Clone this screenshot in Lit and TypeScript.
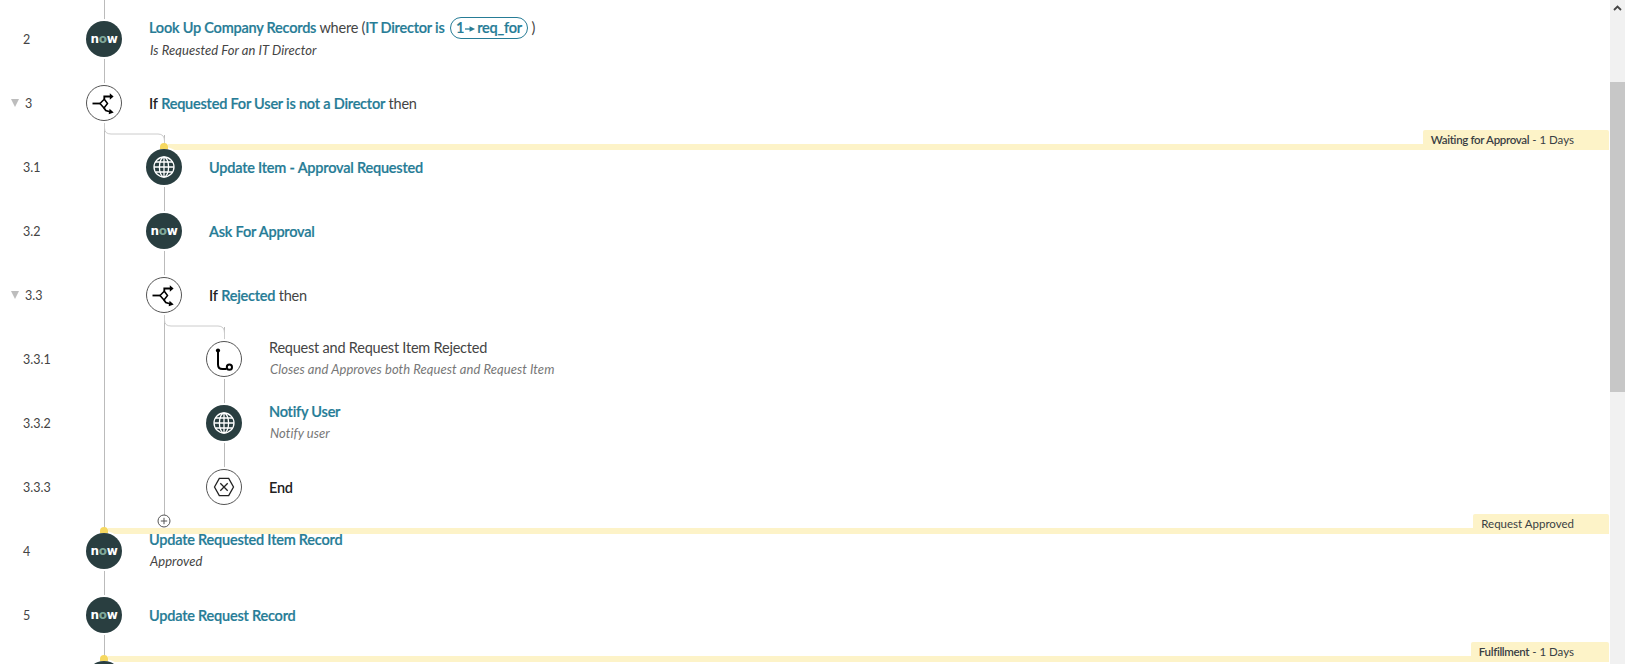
import { LitElement, html, css, svg, nothing } from "lit";
import { customElement } from "lit/decorators.js";

type Kind = "now" | "branch" | "globe" | "path" | "end";
interface Row {
  num: string;
  depth: number;
  kind: Kind;
  title: unknown;
  tall?: boolean;
  sub?: string;
  subMuted?: boolean;
  toggle?: boolean;
  rails: { level: number; half?: boolean }[];
  elbow?: boolean;
  plus?: number;
  stage?: { bold?: string; rest?: string; level: number };
}

const globe = svg`<g fill="none" stroke="#fff" stroke-width="1.3"><circle cx="18" cy="18" r="10"/><ellipse cx="18" cy="18" rx="4.6" ry="10"/><path d="M18 8v20M8 18h20M9.4 13h17.2M9.4 23h17.2"/></g>`;
const branch = svg`<g fill="none" stroke="#000" stroke-width="1.8"><path d="M6.500 18.500h7.500"/><path d="M14 18.500l4.300-4.300 3.200 4.300-3.500 4.500z" stroke-width="1.500"/><path d="M18.300 14v-2.500h6"/><path d="M18 23l1.800 2.500 5 1.500"/></g><path d="M23.800 8.200l3.800 3.300-3.800 3.300zM23.600 23.800l4.100 3.700-5 1.800z" fill="#000"/>`;
const route = svg`<g fill="none" stroke="#000" stroke-width="2"><path d="M12 10v13.500q0 4.500 4.500 4.500h4"/><circle cx="23.400" cy="26.200" r="2.600"/></g><circle cx="12" cy="9.500" r="2.100" fill="#000"/>`;
const endIcon = svg`<g fill="none" stroke="#222" stroke-width="1.3"><path d="M8.500 18l4.800-8.600h9.400l4.800 8.600-4.800 8.600h-9.400z"/><path d="M14.300 14.300l7.400 7.400M21.700 14.300l-7.400 7.400"/></g>`;

const L = (t: string) => html`<span class="link">${t}</span>`;

const rows: Row[] = [
  {
    num: "2", depth: 0, kind: "now", rails: [{ level: 0 }], tall: true,
    title: html`${L("Look Up Company Records")} where (${L("IT Director is")} <span class="pill">1<svg class="arrow" viewBox="0 0 12 8" width="11" height="8"><path d="M0 4h6" stroke="#267c96" stroke-width="1.400"/><path d="M5 1l6 3-6 3z" fill="#267c96"/></svg>req_for</span> )`,
    sub: "Is Requested For an IT Director",
  },
  {
    num: "3", depth: 0, kind: "branch", toggle: true, elbow: true, rails: [{ level: 0 }],
    title: html`<b class="kw">If</b> ${L("Requested For User is not a Director")} then`,
  },
  {
    num: "3.1", depth: 1, kind: "globe", rails: [{ level: 0 }, { level: 1 }],
    title: L("Update Item - Approval Requested"),
    stage: { bold: "Waiting for Approval", rest: " - 1 Days", level: 1 },
  },
  { num: "3.2", depth: 1, kind: "now", rails: [{ level: 0 }, { level: 1 }], title: L("Ask For Approval") },
  {
    num: "3.3", depth: 1, kind: "branch", toggle: true, elbow: true, rails: [{ level: 0 }, { level: 1 }],
    title: html`<b class="kw">If</b> ${L("Rejected")} then`,
  },
  {
    num: "3.3.1", depth: 2, kind: "path", rails: [{ level: 0 }, { level: 1 }, { level: 2 }],
    title: "Request and Request Item Rejected",
    sub: "Closes and Approves both Request and Request Item", subMuted: true,
  },
  {
    num: "3.3.2", depth: 2, kind: "globe", rails: [{ level: 0 }, { level: 1 }, { level: 2 }],
    title: L("Notify User"), sub: "Notify user", subMuted: true,
  },
  {
    num: "3.3.3", depth: 2, kind: "end", rails: [{ level: 0 }, { level: 1 }, { level: 2, half: true }],
    title: html`<b class="kw">End</b>`, plus: 1,
  },
  {
    num: "4", depth: 0, kind: "now", rails: [{ level: 0 }],
    title: L("Update Requested Item Record"), sub: "Approved",
    stage: { rest: "Request Approved", level: 0 },
  },
  { num: "5", depth: 0, kind: "now", rails: [{ level: 0 }], title: L("Update Request Record") },
  {
    num: "6", depth: 0, kind: "now", rails: [{ level: 0 }],
    title: L("Create Catalog Task"),
    stage: { bold: "Fulfillment", rest: " - 1 Days", level: 0 },
  },
];

@customElement("app-root")
export class AppRoot extends LitElement {
  static styles = css`
    :host { display: flex; width: 1629px; height: 664px; overflow: hidden; background: #fff;
      font-family: "Lato", "Liberation Sans", sans-serif; font-size: 14.5px; letter-spacing: -.22px; color: #444; }
    .scroller { flex: 1; min-width: 0; overflow: hidden; }
    .lead { position: relative; height: 7px; }
    .row { position: relative; display: flex; align-items: center; height: 64px; }
    .num { display: flex; align-items: center; width: 86px; flex: none; padding-left: 23px; box-sizing: border-box; font-size: 12.5px; letter-spacing: 0; color: #444; }
    .num.toggled { padding-left: 11px; gap: 6px; }
    .tri { width: 0; height: 0; border-left: 4.5px solid transparent; border-right: 4.5px solid transparent; border-top: 8px solid #bdbdbd; }
    .indent { flex: none; }
    .node { position: relative; z-index: 2; flex: none; width: 36px; height: 36px; border-radius: 50%; box-sizing: border-box; display: flex; align-items: center; justify-content: center; box-shadow: 0 0 0 2px #fff; }
    .node.dark { background: #293e40; }
    .node.light { background: #fff; border: 1px solid #555; }
    .node svg { flex: none; }
    .node.light svg { margin: -1px; }
    .now { color: #fff; font-family: "DejaVu Sans", sans-serif; font-weight: 700; font-size: 12px; letter-spacing: -.3px; line-height: 1; margin-top: -1px; }
    .now i { font-style: normal; color: #7fa89a; }
    .text { position: relative; z-index: 2; margin-left: 27px; white-space: nowrap; }
    .title { line-height: 21px; height: 21px; }
    .withsub .title { line-height: 19px; }
    .withsub .title.tall { height: 23px; line-height: 21px; }
    .sub { line-height: 21px; font-style: italic; font-size: 13px; letter-spacing: .06px; color: #444; margin-left: 1px; }
    .sub.muted { color: #777; }
    .link { color: #267c96; font-weight: 600; -webkit-text-stroke: .2px #267c96; }
    .kw { color: #222; font-weight: 600; }
    .pill { display: inline-block; line-height: 20px; border: 1px solid #267c96; border-radius: 11px; padding: 0 5px; color: #267c96; font-weight: 600; margin-left: 2px; -webkit-text-stroke: .2px #267c96; }
    .arrow { margin: 0 1px; }
    .rail { position: absolute; top: 0; bottom: 0; width: 1px; background: #bbb; z-index: 0; }
    .rail.half { bottom: 50%; }
    .elbow { position: absolute; top: 50px; z-index: 1; }
    .plus { position: absolute; left: 157px; top: 59px; z-index: 3; }
    .band { position: absolute; top: 9px; right: 1px; height: 6px; background: #fdf3c8; z-index: 1; }
    .dot { position: absolute; top: 8px; width: 8px; height: 6px; border-radius: 4px 4px 0 0; background: #f6d860; z-index: 3; }
    .tag { position: absolute; top: -5px; right: 1px; height: 20px; line-height: 20px; background: #fdf3c8; padding: 0 35px 0 8px; font-size: 11.5px; letter-spacing: 0; color: #3a3f44; border-radius: 2px 2px 2px 0; z-index: 1; white-space: nowrap; }
    .tag b { font-weight: 600; letter-spacing: -.33px; }
    .sb { flex: none; width: 15px; margin-right: 4px; background: #f1f1f1; display: flex; flex-direction: column; }
    .sb-btn { height: 15px; display: flex; align-items: center; justify-content: center; flex: none; }
    .thumb { margin-top: 67px; height: 310px; background: #c7c7c7; flex: none; }
  `;

  private icon(kind: Kind) {
    if (kind === "now") return html`<div class="node dark"><span class="now">n<i>o</i>w</span></div>`;
    if (kind === "globe") return html`<div class="node dark"><svg width="36" height="36" viewBox="0 0 36 36">${globe}</svg></div>`;
    const g = kind === "branch" ? branch : kind === "path" ? route : endIcon;
    return html`<div class="node light"><svg width="36" height="36" viewBox="0 0 36 36">${g}</svg></div>`;
  }

  private renderRow(r: Row) {
    const x = (level: number) => 104 + level * 60;
    return html`<div class="row">
      ${r.rails.map((rail) => html`<div class="rail ${rail.half ? "half" : ""}" style="left:${x(rail.level)}px"></div>`)}
      ${r.elbow ? html`<svg class="elbow" style="left:${x(r.depth)}px" width="62" height="28" viewBox="0 0 62 28"><path d="M.5 0V7Q.5 13 7 13H54Q60.5 13 60.5 20V28" fill="none" stroke="#ccc"/></svg>` : nothing}
      ${r.stage ? html`<div class="band" style="left:${x(r.stage.level) + 4}px"></div>
        <div class="dot" style="left:${x(r.stage.level) - 4}px"></div>
        <div class="tag">${r.stage.bold ? html`<b>${r.stage.bold}</b>` : nothing}${r.stage.rest}</div>` : nothing}
      ${r.plus ? html`<svg class="plus" width="14" height="14" viewBox="0 0 14 14"><circle cx="7" cy="7" r="6" fill="#fff" stroke="#555"/><path d="M3.8 7h6.4M7 3.8v6.4" stroke="#555"/></svg>` : nothing}
      <div class="num ${r.toggle ? "toggled" : ""}">${r.toggle ? html`<span class="tri"></span>` : nothing}<span>${r.num}</span></div>
      <div class="indent" style="width:${r.depth * 60}px"></div>
      ${this.icon(r.kind)}
      <div class="text ${r.sub ? "withsub" : ""}">
        <div class="title ${r.tall ? "tall" : ""}">${r.title}</div>
        ${r.sub ? html`<div class="sub ${r.subMuted ? "muted" : ""}">${r.sub}</div>` : nothing}
      </div>
    </div>`;
  }

  render() {
    return html`
      <div class="scroller">
        <div class="lead"><div class="rail" style="left:104px"></div></div>
        ${rows.map((r) => this.renderRow(r))}
      </div>
      <div class="sb">
        <div class="sb-btn"><svg width="9" height="6" viewBox="0 0 9 6"><path d="M1 5l3.500-3.500L8 5" fill="none" stroke="#444" stroke-width="1.800"/></svg></div>
        <div class="thumb"></div>
      </div>`;
  }
}
